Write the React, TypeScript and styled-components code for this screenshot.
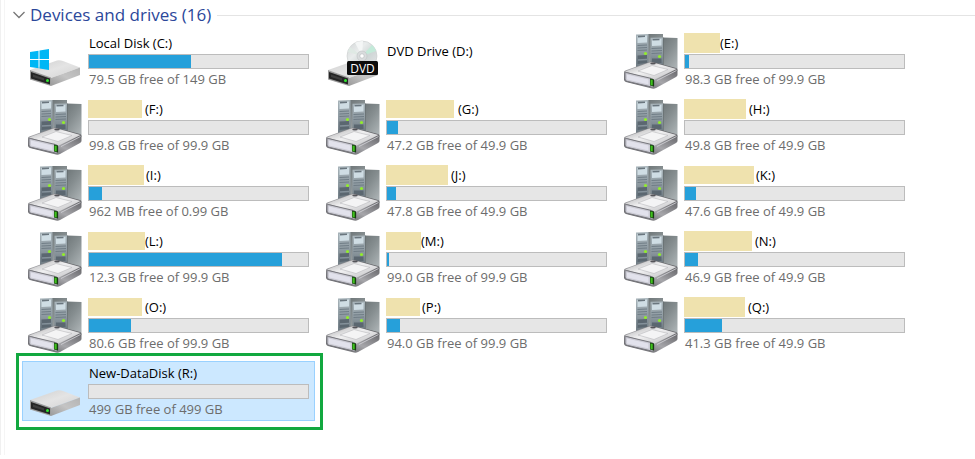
import React, { useState } from "react";
import styled, { createGlobalStyle, css } from "styled-components";

type Kind = "system" | "dvd" | "server" | "disk";

interface Drive {
  letter: string;
  kind: Kind;
  name?: string;
  mask?: { width: number; height: number; gap: number };
  free?: string;
  used?: number;
}

const drives: Drive[] = [
  { letter: "C", kind: "system", name: "Local Disk", free: "79.5 GB free of 149 GB", used: 46.5 },
  { letter: "D", kind: "dvd", name: "DVD Drive" },
  { letter: "E", kind: "server", mask: { width: 36, height: 20, gap: 0 }, free: "98.3 GB free of 99.9 GB", used: 1.8 },
  { letter: "F", kind: "server", mask: { width: 54, height: 18, gap: 3 }, free: "99.8 GB free of 99.9 GB", used: 0 },
  { letter: "G", kind: "server", mask: { width: 68, height: 18, gap: 4 }, free: "47.2 GB free of 49.9 GB", used: 5 },
  { letter: "H", kind: "server", mask: { width: 62, height: 20, gap: 3 }, free: "49.8 GB free of 49.9 GB", used: 0 },
  { letter: "I", kind: "server", mask: { width: 56, height: 20, gap: 2 }, free: "962 MB free of 0.99 GB", used: 6 },
  { letter: "J", kind: "server", mask: { width: 62, height: 20, gap: 3 }, free: "47.8 GB free of 49.9 GB", used: 4 },
  { letter: "K", kind: "server", mask: { width: 70, height: 18, gap: 2 }, free: "47.6 GB free of 49.9 GB", used: 4.8 },
  { letter: "L", kind: "server", mask: { width: 57, height: 18, gap: 0 }, free: "12.3 GB free of 99.9 GB", used: 88 },
  { letter: "M", kind: "server", mask: { width: 35, height: 18, gap: 0 }, free: "99.0 GB free of 99.9 GB", used: 0.9 },
  { letter: "N", kind: "server", mask: { width: 68, height: 20, gap: 3 }, free: "46.9 GB free of 49.9 GB", used: 6 },
  { letter: "O", kind: "server", mask: { width: 54, height: 18, gap: 3 }, free: "80.6 GB free of 99.9 GB", used: 19 },
  { letter: "P", kind: "server", mask: { width: 34, height: 18, gap: 2 }, free: "94.0 GB free of 99.9 GB", used: 6 },
  { letter: "Q", kind: "server", mask: { width: 61, height: 20, gap: 3 }, free: "41.3 GB free of 49.9 GB", used: 17 },
  { letter: "R", kind: "disk", name: "New-DataDisk", free: "499 GB free of 499 GB", used: 0 },
];

const GlobalStyle = createGlobalStyle`
  * { box-sizing: border-box; }
  body {
    margin: 0;
    background: #fff;
    font-family: "Open Sans", "Noto Sans", sans-serif;
  }
`;

const Frame = styled.div`
  padding-left: 3px;
  border-left: 1px solid #f0f0f0;
`;

const Pane = styled.main`
  border-left: 1px solid #f5f5f5;
  padding: 4px 0 34px;
`;

const Header = styled.header`
  display: flex;
  align-items: center;
  gap: 6px;
  height: 22px;
`;

const Toggle = styled.button`
  display: flex;
  align-items: center;
  gap: 5px;
  padding: 0 0 0 8px;
  border: 0;
  background: none;
  font: inherit;
  white-space: nowrap;
`;

const Title = styled.span`
  color: #2b479a;
  font-size: 17px;
  line-height: 22px;
`;

const Rule = styled.span`
  flex: 1;
  height: 1px;
  background: #e4e4e4;
`;

const Grid = styled.ul`
  display: grid;
  grid-template-columns: repeat(auto-fill, 293px);
  gap: 6px 5px;
  margin: 0;
  padding: 5px 0 0 17px;
  list-style: none;
`;

const Cell = styled.li<{ $marked: boolean }>`
  position: relative;
  display: flex;

  ${(p) =>
    p.$marked &&
    css`
      &::after {
        content: "";
        position: absolute;
        inset: -8px -8px -9px -6px;
        border: 3px solid #12a83f;
        pointer-events: none;
      }
    `}
`;

const Tile = styled.button<{ $selected: boolean }>`
  display: flex;
  flex: 1;
  align-items: flex-start;
  gap: 5px;
  height: 60px;
  padding: 0 5px 0 4px;
  border: 1px solid ${(p) => (p.$selected ? "#99d1ff" : "transparent")};
  background: ${(p) => (p.$selected ? "#cce8ff" : "transparent")};
  font: inherit;
  text-align: left;
`;

const Icon = styled.svg`
  flex: none;
  width: 56px;
  height: 58px;
`;

const Details = styled.span<{ $single: boolean }>`
  display: flex;
  flex: 1;
  flex-direction: column;
  padding-top: ${(p) => (p.$single ? 8 : 0)}px;
`;

const Name = styled.span`
  display: flex;
  align-items: center;
  height: 22px;
  color: #000;
  font-size: 13px;
  line-height: 22px;
  white-space: nowrap;
`;

const Label = styled.span<{ $inset: boolean }>`
  padding-left: ${(p) => (p.$inset ? 1 : 0)}px;
`;

const Mask = styled.span<{ $width: number; $height: number; $gap: number }>`
  width: ${(p) => p.$width}px;
  height: ${(p) => p.$height}px;
  margin-right: ${(p) => p.$gap}px;
  background: #efe2ae;
`;

const Meter = styled.span`
  display: flex;
  height: 15px;
  border: 1px solid #bcbcbc;
  background: #e6e6e6;
`;

const Fill = styled.span`
  background: #26a0da;
`;

const Free = styled.span`
  padding-left: 1px;
  color: #6d6d6d;
  font-size: 13px;
  line-height: 20px;
  white-space: nowrap;
`;

function DriveBody({ id }: { id: string }) {
  return (
    <>
      <defs>
        <linearGradient id={`${id}-top`} x1="0" y1="0" x2="1" y2="1">
          <stop offset="0" stopColor="#cfcfcf" />
          <stop offset="0.5" stopColor="#e4e4e4" />
          <stop offset="1" stopColor="#d2d2d2" />
        </linearGradient>
        <linearGradient id={`${id}-side`} x1="0" y1="1" x2="1" y2="0">
          <stop offset="0" stopColor="#9a9a9a" />
          <stop offset="0.5" stopColor="#c4c4c4" />
          <stop offset="1" stopColor="#b4b4b4" />
        </linearGradient>
      </defs>
      <path d="M3 38 L30 28.5 Q33 28 36 29 L53 35.5 L24 46 Z" fill={`url(#${id}-top)`} />
      <path d="M24 46 L53 35.5 V43 L24 54 Z" fill={`url(#${id}-side)`} />
      <path d="M3 38 L24 45.5 V54 L3 47.5 Z" fill="#9b9b9b" />
      <path d="M4 40 L23 46.5 V52.5 L4 46.5 Z" fill="#252525" />
      <path d="M6 42.5 L17 46.3 V48.5 L6 45 Z" fill="#3d3d3d" />
      <circle cx="20.5" cy="48.5" r="1.5" fill="#2fe52f" />
    </>
  );
}

function DiskIcon({ id }: { id: string }) {
  return (
    <Icon viewBox="0 0 56 58" aria-hidden="true">
      <DriveBody id={id} />
    </Icon>
  );
}

function SystemIcon({ id }: { id: string }) {
  return (
    <Icon viewBox="0 0 56 58" aria-hidden="true">
      <DriveBody id={id} />
      <path d="M3 20 L11.5 18.7 V27 H3 Z M12.5 18.5 L22 17 V27 H12.5 Z M3 28 H11.5 V36.3 L3 35 Z M12.5 28 H22 V38 L12.5 36.5 Z" fill="#00b7f5" />
    </Icon>
  );
}

function DvdIcon({ id }: { id: string }) {
  return (
    <Icon viewBox="0 0 56 58" aria-hidden="true">
      <DriveBody id={id} />
      <defs>
        <linearGradient id={`${id}-disc`} x1="0" y1="0" x2="1" y2="1">
          <stop offset="0" stopColor="#d2d5d6" />
          <stop offset="0.35" stopColor="#e9ecec" />
          <stop offset="0.6" stopColor="#cfd6d6" />
          <stop offset="1" stopColor="#e8e8ea" />
        </linearGradient>
      </defs>
      <circle cx="37" cy="24" r="15" fill={`url(#${id}-disc)`} stroke="#c9cccd" strokeWidth="0.6" />
      <path d="M37 24 L30 10.8 A15 15 0 0 1 38 9 Z" fill="#f4f6f6" />
      <path d="M37 24 L47 13 A15 15 0 0 1 51 19 Z" fill="#c3ead9" />
      <path d="M37 24 L23 20 A15 15 0 0 1 25 15 Z" fill="#dfe9e4" />
      <circle cx="37" cy="24" r="5" fill="#d9dcdd" stroke="#bfc3c5" strokeWidth="0.6" />
      <circle cx="37" cy="24" r="2.2" fill="#fff" stroke="#b4b8ba" strokeWidth="0.6" />
      <rect x="22" y="29" width="31" height="14" rx="1.5" fill="#0c0c0c" />
      <text x="37.5" y="40.5" textAnchor="middle" fontFamily="Open Sans, sans-serif" fontSize="12" fill="#fff">
        DVD
      </text>
    </Icon>
  );
}

function ServerIcon({ id }: { id: string }) {
  return (
    <Icon viewBox="0 0 56 58" aria-hidden="true">
      <defs>
        <linearGradient id={`${id}-tower`} x1="0" y1="0" x2="0.6" y2="1">
          <stop offset="0" stopColor="#6f7779" />
          <stop offset="0.45" stopColor="#858d8f" />
          <stop offset="1" stopColor="#a9b0b2" />
        </linearGradient>
        <linearGradient id={`${id}-front`} x1="0" y1="0" x2="0" y2="1">
          <stop offset="0" stopColor="#a9b5bb" />
          <stop offset="0.5" stopColor="#909ca3" />
          <stop offset="1" stopColor="#6d7981" />
        </linearGradient>
        <linearGradient id={`${id}-lid`} x1="0" y1="0" x2="1" y2="1">
          <stop offset="0" stopColor="#a9a9ab" />
          <stop offset="0.45" stopColor="#f0f0f1" />
          <stop offset="1" stopColor="#bdbdc0" />
        </linearGradient>
        <linearGradient id={`${id}-edge`} x1="0.4" y1="1" x2="1" y2="0.3">
          <stop offset="0" stopColor="#6a6a6e" />
          <stop offset="0.4" stopColor="#a6a6aa" />
          <stop offset="1" stopColor="#66666a" />
        </linearGradient>
      </defs>
      <path d="M25 2 H40 V34 H25 Z" fill={`url(#${id}-tower)`} />
      <path d="M13 2.5 L25.5 2 V34 L13 36 Z" fill={`url(#${id}-front)`} />
      <path d="M14.5 4 L24 3.5 V10.5 L14.5 11 Z" fill="#cfdde4" />
      <path d="M15 3.8 L22 3.4 V5 L15 5.400 Z" fill="#6a767e" />
      <path d="M14.500 13.500 L24 13 M14.500 16 L24 15.500 M14.500 18.500 L24 18" stroke="#6c7982" strokeWidth="0.9" />
      <path d="M14.500 23.500 L24 23 V31 L14.500 32 Z" fill="#5b6770" />
      <path d="M15 28 L24 27.500" stroke="#84919a" strokeWidth="1.500" />
      <circle cx="22.500" cy="21.500" r="1.600" fill="#91ed2b" />
      <path d="M40 5.500 L54.500 6 V39 L40 40 Z" fill={`url(#${id}-tower)`} />
      <path d="M40.300 5.500 V38" stroke="#626a6c" strokeWidth="0.700" />
      <path d="M27.500 5.800 L40 5.500 V34 H27.500 Z" fill={`url(#${id}-front)`} />
      <path d="M29 7.200 L38.500 6.800 V13.500 L29 14 Z" fill="#cfdde4" />
      <path d="M29.500 7 L36.500 6.700 V8.300 L29.500 8.600 Z" fill="#6a767e" />
      <path d="M28.500 16.500 L39 16 M28.500 19 L39 18.500 M28.500 21.500 L39 21" stroke="#6c7982" strokeWidth="0.900" />
      <path d="M29 26.500 H38.500 V31 H29 Z" fill="#5b6770" />
      <circle cx="36.500" cy="24.500" r="1.600" fill="#91ed2b" />
      <path d="M1 40 Q1 39 3 38.200 L26 30 Q28 29.300 30 30 L53 36 Q54.500 36.500 54.500 38 V43 Q54.500 44 53 45 L33 56 Q31 57 29 56.500 L3 50 Q1 49.300 1 47.500 Z" fill={`url(#${id}-edge)`} />
      <path d="M2 39.500 L26 30.500 Q28 30 30 30.500 L53.500 37 L33 47 Q31 48 29 47.500 Z" fill={`url(#${id}-lid)`} />
      <path d="M15 39 L29 33.500 L45 37.500 L31 43.500 Z" fill="#f4f4f5" stroke="#b9b9bc" strokeWidth="0.600" />
      <ellipse cx="30" cy="31.500" rx="2.800" ry="1" fill="#55555a" />
      <path d="M2 41.500 Q2 40.300 4 40.700 L28.500 46.500 Q31 47.200 31 49 V54 Q31 55.500 28.500 55 L4 49.300 Q2 48.800 2 47 Z" fill="#cbcbd4" stroke="#77777d" strokeWidth="1" />
      <path d="M4 42.500 L25.500 47.500 V52.500 L4 47.500 Z" fill="#e2e2ec" />
      <path d="M27 46.500 L31 47.500 V54.500 L27 53.500 Z" fill="#173d12" />
      <path d="M27.500 47.500 L29.700 48 V53.500 L27.500 53 Z" fill="#3fc21d" />
      <path d="M34 48.500 L53.500 38.500" stroke="#d6d6da" strokeWidth="0.800" />
    </Icon>
  );
}

const icons: Record<Kind, React.ComponentType<{ id: string }>> = {
  system: SystemIcon,
  dvd: DvdIcon,
  server: ServerIcon,
  disk: DiskIcon,
};

function DriveTile({ drive, selected, onSelect }: { drive: Drive; selected: boolean; onSelect: () => void }) {
  const { letter, kind, name, mask, free, used } = drive;
  const DriveIcon = icons[kind];
  return (
    <Cell $marked={letter === "R"}>
      <Tile type="button" $selected={selected} aria-pressed={selected} onClick={onSelect}>
        <DriveIcon id={`drive-${letter}`} />
        <Details $single={!free}>
          <Name>
            {mask && <Mask $width={mask.width} $height={mask.height} $gap={mask.gap} />}
            <Label $inset={!mask}>{name ? `${name} (${letter}:)` : `(${letter}:)`}</Label>
          </Name>
          {free && (
            <>
              <Meter role="meter" aria-label={`Space used on ${letter}:`} aria-valuemin={0} aria-valuemax={100} aria-valuenow={used}>
                <Fill style={{ width: `${used}%` }} />
              </Meter>
              <Free>{free}</Free>
            </>
          )}
        </Details>
      </Tile>
    </Cell>
  );
}

export default function App() {
  const [selected, setSelected] = useState("R");
  const [open, setOpen] = useState(true);
  return (
    <>
      <GlobalStyle />
      <Frame>
        <Pane>
          <Header>
            <Toggle type="button" aria-expanded={open} onClick={() => setOpen(!open)}>
              <svg width="12" height="8" viewBox="0 0 12 8" aria-hidden="true">
                <path d="M0.5 1 L6 6.5 L11.5 1" fill="none" stroke="#777" strokeWidth="1.3" />
              </svg>
              <Title>Devices and drives (16)</Title>
            </Toggle>
            <Rule />
          </Header>
          {open && (
            <Grid>
              {drives.map((d) => (
                <DriveTile key={d.letter} drive={d} selected={selected === d.letter} onSelect={() => setSelected(d.letter)} />
              ))}
            </Grid>
          )}
        </Pane>
      </Frame>
    </>
  );
}
